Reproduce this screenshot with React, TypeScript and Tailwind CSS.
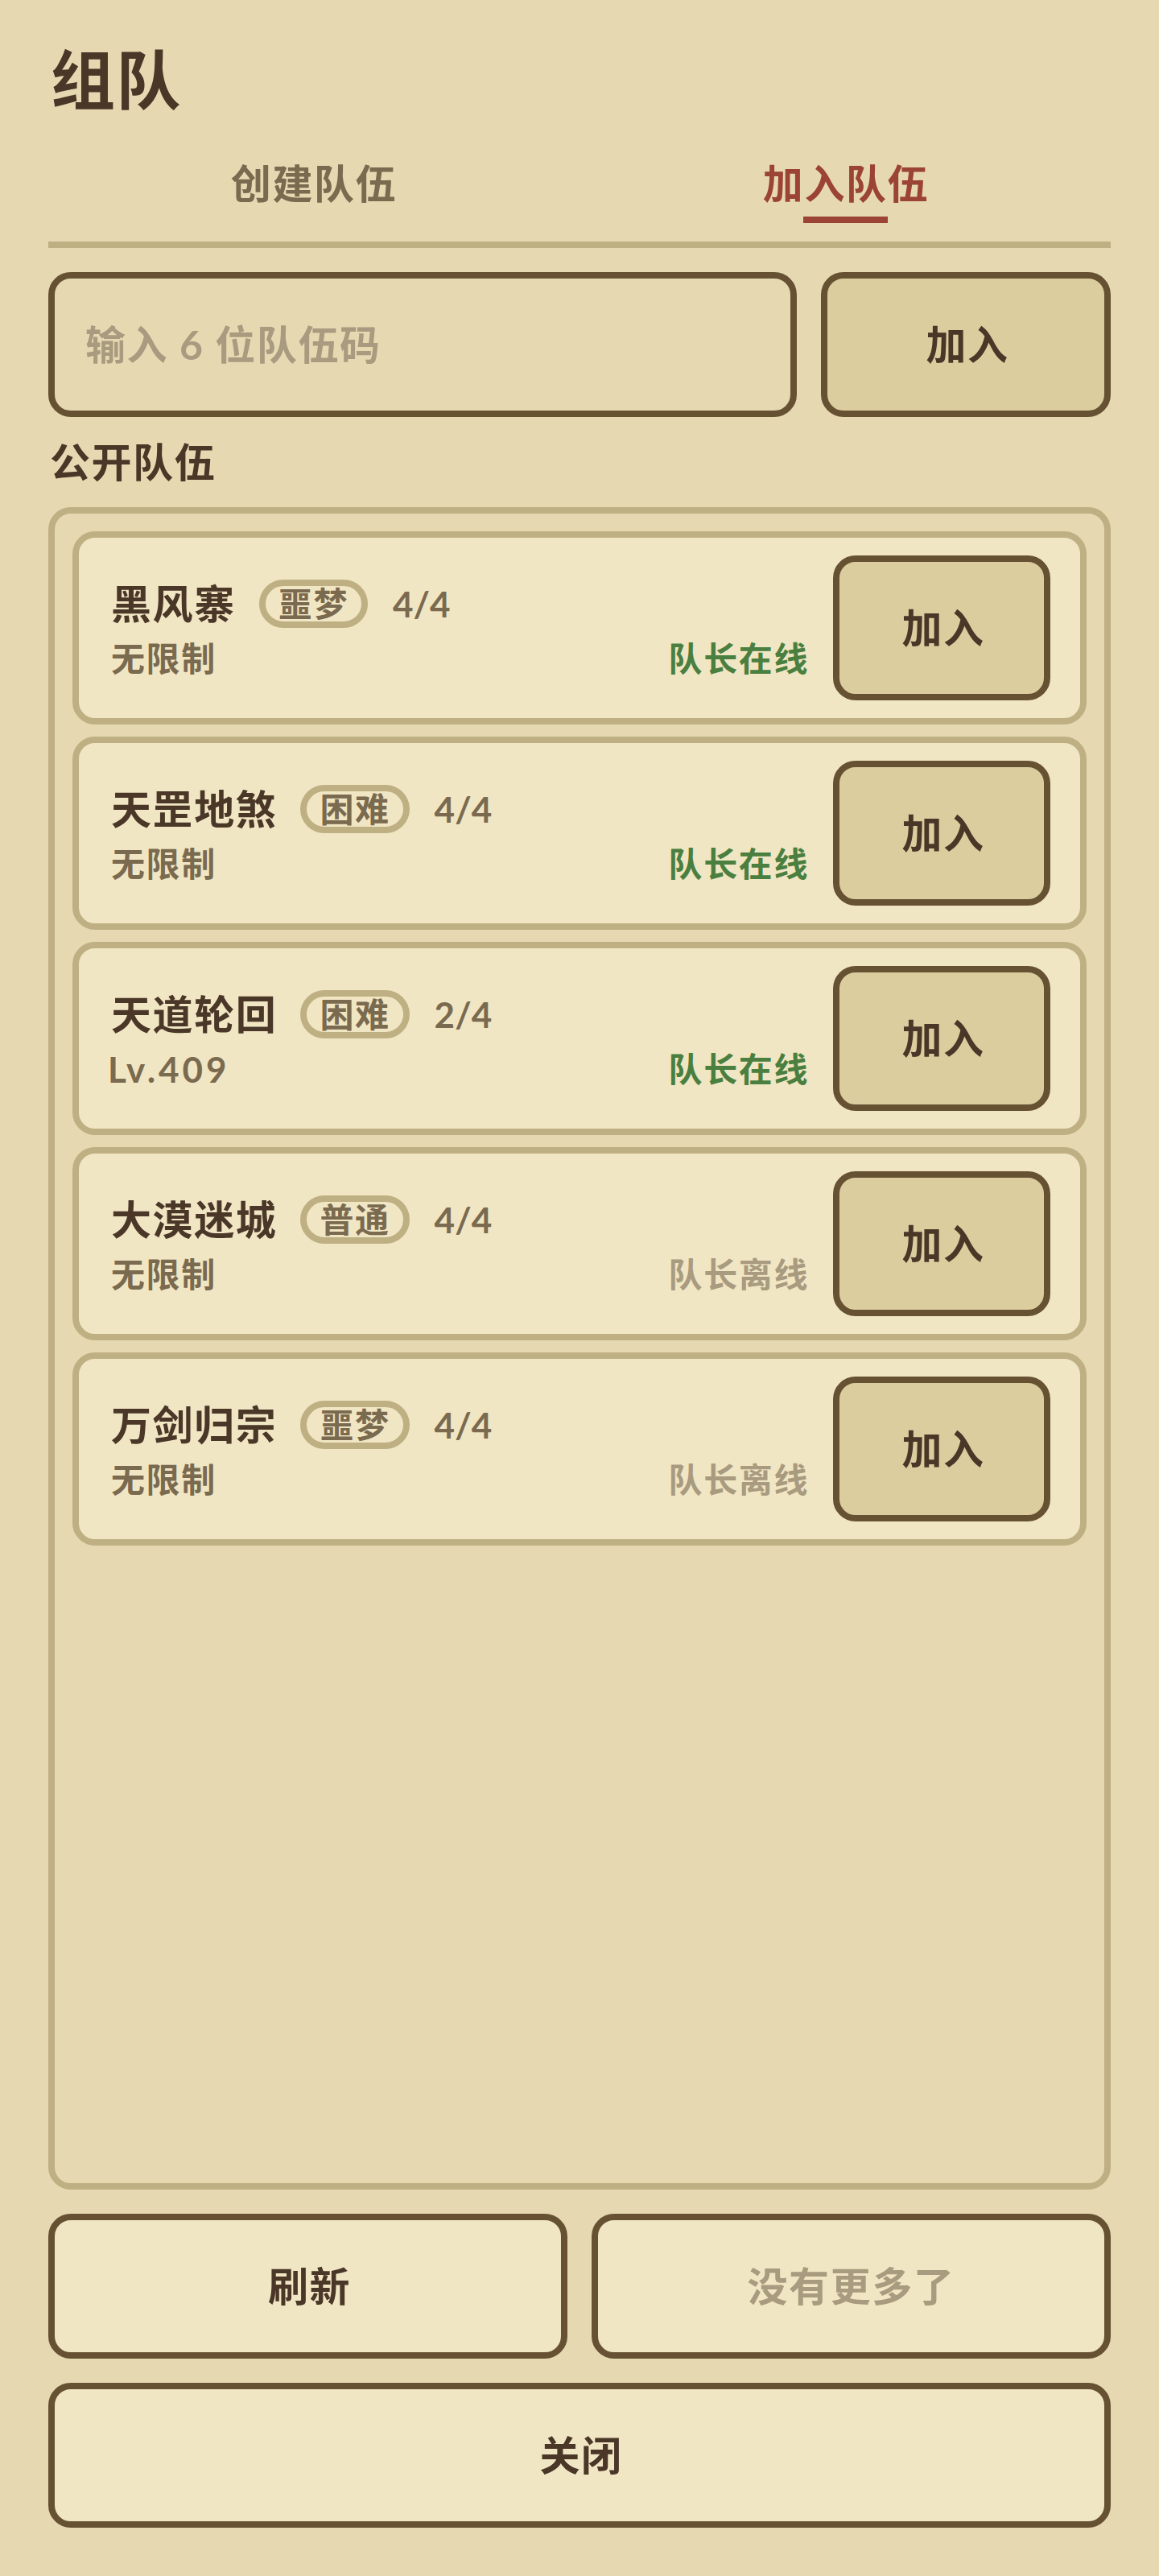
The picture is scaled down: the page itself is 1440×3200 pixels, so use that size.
const teams = [
  { name: "黑风寨", level: "噩梦", count: "4/4", limit: "无限制", online: true },
  { name: "天罡地煞", level: "困难", count: "4/4", limit: "无限制", online: true },
  { name: "天道轮回", level: "困难", count: "2/4", limit: "Lv.409", online: true },
  { name: "大漠迷城", level: "普通", count: "4/4", limit: "无限制", online: false },
  { name: "万剑归宗", level: "噩梦", count: "4/4", limit: "无限制", online: false },
];

const fontStack = "font-['Lato','Noto_Sans_CJK_SC',sans-serif]";

export default function App() {
  return (
    <div
      className={`${fontStack} flex h-[3200px] flex-col bg-[#e6d9b2] px-[60px] pt-[48px] pb-[60px] font-bold tracking-[0.1em] text-[#4a3728]`}
    >
      <h1 className="h-[100px] pl-[3px] text-[80px] leading-[100px] font-bold">组队</h1>

      {/* Tabs */}
      <div className="grid grid-cols-2 border-b-8 border-[#bfb083]">
        <div className="flex flex-col items-center pt-[50px] pb-[42px]">
          <span className="h-[60px] text-[50px] leading-[60px] text-[#7a6a4f]">创建队伍</span>
        </div>
        <div className="flex flex-col items-center pt-[50px] pb-[23px]">
          <span className="h-[60px] pl-[2px] text-[50px] leading-[60px] text-[#9b4334]">加入队伍</span>
          <span className="mt-[11px] h-2 w-[105px] bg-[#9b4334]" />
        </div>
      </div>

      {/* Team code */}
      <div className="mt-[30px] flex gap-[30px]">
        <div className="flex h-[180px] flex-1 items-center rounded-[28px] border-8 border-[#665233] pl-[38px] text-[50px] text-[#a99b7f]">
          输入 6 位队伍码
        </div>
        <button className="flex h-[180px] w-[360px] items-center justify-center rounded-[28px] border-8 border-[#665233] bg-[#dccd9f] pl-[4px] text-[50px] font-bold">
          加入
        </button>
      </div>

      <div className="flex h-[112px] items-center pl-[2px] text-[50px]">公开队伍</div>

      {/* Public teams */}
      <div className="flex min-h-0 flex-1 flex-col gap-[15px] rounded-[28px] border-8 border-[#bfb083] p-[22px]">
        {teams.map((t) => (
          <div
            key={t.name}
            className="flex h-[240px] rounded-[28px] border-8 border-[#bfb083] bg-[#f1e6c4] py-[22px] pr-[37px] pl-[40px]"
          >
            <div className="flex-1 pt-[30px] pr-[30px]">
              <div className="flex h-[60px] items-center">
                <span className="text-[50px]">{t.name}</span>
                <span className="ml-[29px] flex h-[60px] items-center rounded-full border-8 border-[#bfb083] px-[16px] text-[42px] text-[#7a6a4f]">
                  {t.level}
                </span>
                <span className="ml-[31px] text-[44px] tracking-normal text-[#7a6a4f]">{t.count}</span>
              </div>
              <div className="mt-[10px] flex h-[56px] items-center justify-between text-[42px]">
                <span
                  className={
                    t.limit.startsWith("Lv")
                      ? "-ml-[4px] text-[44px] tracking-[0.09em] text-[#7a6a4f]"
                      : "text-[#7a6a4f]"
                  }
                >
                  {t.limit}
                </span>
                <span className={t.online ? "text-[#4a7f3f]" : "text-[#a99b7f]"}>
                  {t.online ? "队长在线" : "队长离线"}
                </span>
              </div>
            </div>
            <button className="flex h-[180px] w-[270px] items-center justify-center rounded-[28px] border-8 border-[#665233] bg-[#dccd9f] pl-[4px] text-[50px] font-bold">
              加入
            </button>
          </div>
        ))}
      </div>

      {/* Footer buttons */}
      <div className="mt-[30px] grid grid-cols-2 gap-[30px]">
        <button className="flex h-[180px] items-center justify-center rounded-[28px] border-8 border-[#665233] bg-[#f1e6c4] pl-[4px] text-[50px] font-bold">
          刷新
        </button>
        <button className="flex h-[180px] items-center justify-center rounded-[28px] border-8 border-[#665233] bg-[#f1e6c4] text-[50px] font-bold text-[#a99b7f]">
          没有更多了
        </button>
      </div>
      <button className="mt-[30px] flex h-[180px] items-center justify-center rounded-[28px] border-8 border-[#665233] bg-[#f1e6c4] pl-[4px] text-[50px] font-bold">
        关闭
      </button>
    </div>
  );
}
